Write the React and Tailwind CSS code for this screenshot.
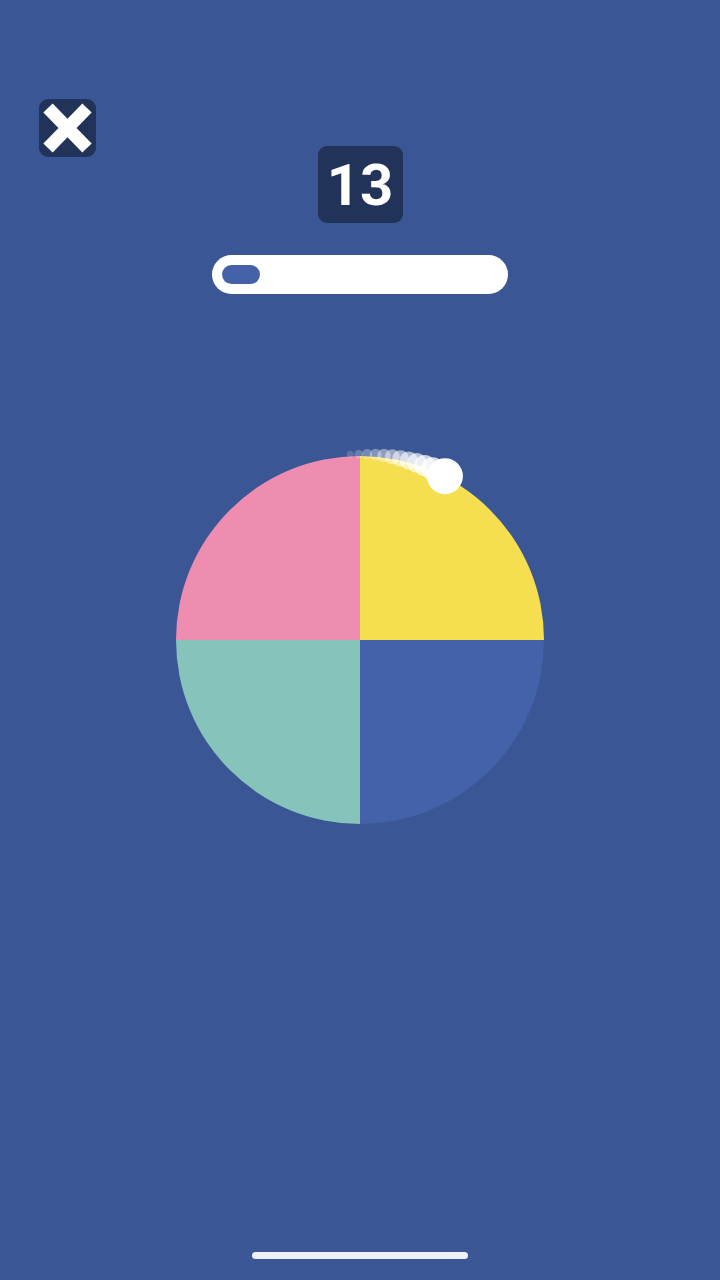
import React from "react";

const CX = 200;
const CY = 200;
const R = 184;

function polar(angleDeg, r) {
  const a = (angleDeg * Math.PI) / 180;
  return [CX + r * Math.sin(a), CY - r * Math.cos(a)];
}

function quadrant(start, end) {
  const [x1, y1] = polar(start, R);
  const [x2, y2] = polar(end, R);
  return `M${CX} ${CY} L${x1} ${y1} A${R} ${R} 0 0 1 ${x2} ${y2} Z`;
}

const trail = Array.from({ length: 11 }, (_, i) => {
  const t = i / 10;
  return { angle: -3 + t * 26, r: 3.5 + t * 8, o: 0.18 + t * 0.6 };
});

export default function App() {
  const [bx, by] = polar(27.4, 184.5);

  return (
    <div className="relative w-[720px] h-[1280px] bg-[#3b5694] overflow-hidden font-['Roboto',sans-serif]">
      <button className="absolute left-[39px] top-[99px] w-[57px] h-[58px] rounded-[9px] bg-[#22335a] flex items-center justify-center">
        <svg width="57" height="58" viewBox="0 0 57 58">
          <path d="M9 9 L48 49 M48 9 L9 49" stroke="#fff" strokeWidth="13" strokeLinecap="butt" />
        </svg>
      </button>

      <div className="flex flex-col items-center pt-[146px]">
        <div className="w-[85px] h-[77px] rounded-[9px] bg-[#22335a] flex items-center justify-center">
          <span className="text-white font-bold text-[58px] leading-none">13</span>
        </div>

        <div className="mt-[32px] w-[296px] h-[39px] rounded-full bg-white flex items-center px-[10px]">
          <div className="w-[38px] h-[19px] rounded-full bg-[#4562a8]" />
        </div>

        <svg className="mt-[146px]" width="400" height="400" viewBox="0 0 400 400">
          <path d={quadrant(0, 90)} fill="#f5df50" />
          <path d={quadrant(90, 180)} fill="#4462aa" />
          <path d={quadrant(180, 270)} fill="#85c3bb" />
          <path d={quadrant(270, 360)} fill="#ef8db0" />
          {trail.map((p, i) => {
            const [x, y] = polar(p.angle, 186);
            return <circle key={i} cx={x} cy={y} r={p.r} fill="#fff" opacity={p.o} />;
          })}
          <circle cx={bx} cy={by} r="18" fill="#fff" />
        </svg>
      </div>

      <div className="absolute left-[252px] top-[1252px] w-[216px] h-[7px] rounded-full bg-[#eef0f6]" />
    </div>
  );
}
